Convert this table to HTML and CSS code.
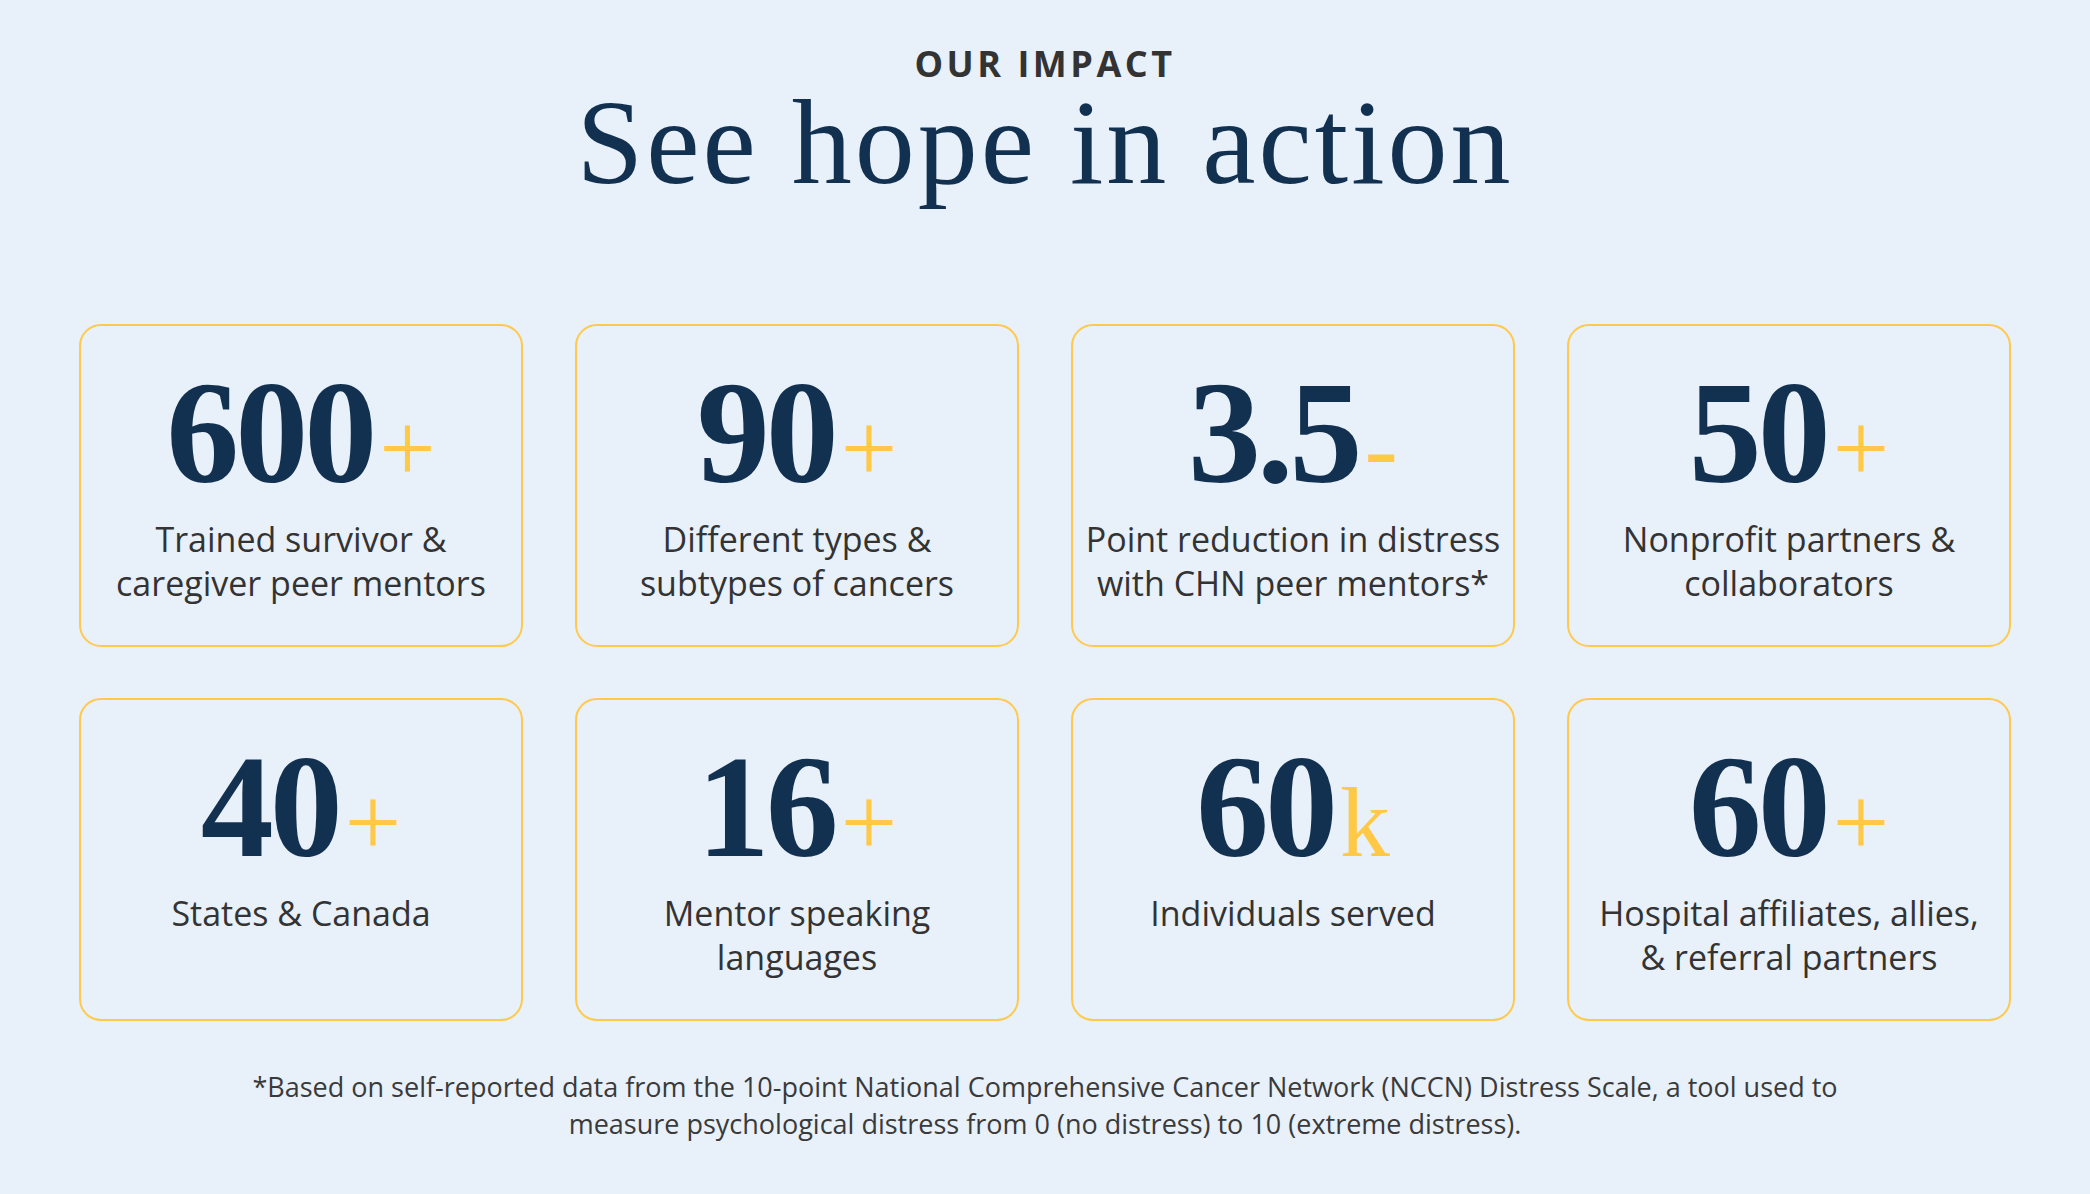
FILE: index.html
```html
<!DOCTYPE html>
<html lang="en">
<head>
<meta charset="utf-8">
<title>Our Impact</title>
<link rel="stylesheet" href="styles.css">
</head>
<body>
<section class="impact">
  <header class="impact-header">
    <p class="eyebrow">OUR IMPACT</p>
    <h1 class="title">See hope in action</h1>
  </header>
  <div class="stats">
    <div class="stat">
      <div class="stat-num">600<span class="suffix">+</span></div>
      <p class="stat-label">Trained survivor &amp;<br>caregiver peer mentors</p>
    </div>
    <div class="stat">
      <div class="stat-num">90<span class="suffix">+</span></div>
      <p class="stat-label">Different types &amp;<br>subtypes of cancers</p>
    </div>
    <div class="stat">
      <div class="stat-num">3.5<span class="suffix">-</span></div>
      <p class="stat-label">Point reduction in distress<br>with CHN peer mentors*</p>
    </div>
    <div class="stat">
      <div class="stat-num">50<span class="suffix">+</span></div>
      <p class="stat-label">Nonprofit partners &amp;<br>collaborators</p>
    </div>
    <div class="stat">
      <div class="stat-num">40<span class="suffix">+</span></div>
      <p class="stat-label">States &amp; Canada</p>
    </div>
    <div class="stat">
      <div class="stat-num">16<span class="suffix">+</span></div>
      <p class="stat-label">Mentor speaking<br>languages</p>
    </div>
    <div class="stat">
      <div class="stat-num">60<span class="suffix">k</span></div>
      <p class="stat-label">Individuals served</p>
    </div>
    <div class="stat">
      <div class="stat-num">60<span class="suffix">+</span></div>
      <p class="stat-label">Hospital affiliates, allies,<br>&amp; referral partners</p>
    </div>
  </div>
  <p class="footnote">*Based on self-reported data from the 10-point National Comprehensive Cancer Network (NCCN) Distress Scale, a tool used to<br>measure psychological distress from 0 (no distress) to 10 (extreme distress).</p>
</section>
</body>
</html>
```
FILE: styles.css
```css
html, body {
  margin: 0;
  padding: 0;
  background: #e8f0f9;
}

body {
  font-family: "Open Sans", "Noto Sans", sans-serif;
  color: #333333;
}

.impact {
  padding: 49px 0 40px;
}

.impact-header {
  text-align: center;
}

.eyebrow {
  margin: 0;
  font-family: "Open Sans", "Noto Sans", sans-serif;
  font-weight: 700;
  font-size: 36px;
  line-height: 30px;
  letter-spacing: 3.5px;
  color: #333333;
}

.title {
  margin: 0;
  font-family: "Liberation Serif", "Times New Roman", serif;
  font-weight: 400;
  font-size: 120px;
  line-height: 127px;
  letter-spacing: 3px;
  color: #12304f;
}

.stats {
  max-width: 1932px;
  margin: 118px auto 0;
  display: grid;
  grid-template-columns: repeat(4, 1fr);
  grid-auto-rows: 323px;
  column-gap: 52px;
  row-gap: 51px;
}

.stat {
  box-sizing: border-box;
  border: 2px solid #ffc94a;
  border-radius: 22px;
  padding: 34px 8px 0;
  text-align: center;
}

.stat-num {
  font-family: "Liberation Serif", "Times New Roman", serif;
  font-weight: 700;
  font-size: 146px;
  line-height: 146px;
  letter-spacing: -4px;
  color: #12304f;
  white-space: nowrap;
}

.suffix {
  font-weight: 400;
  font-size: 100px;
  line-height: 1;
  letter-spacing: 0;
  margin-left: 6px;
  color: #ffc845;
}

.stat-label {
  margin: 11px 0 0;
  font-size: 34px;
  line-height: 44px;
  color: #333333;
  white-space: nowrap;
}

.footnote {
  margin: 47px 0 0;
  text-align: center;
  font-size: 27px;
  line-height: 37px;
  color: #3a3a3a;
}
```
